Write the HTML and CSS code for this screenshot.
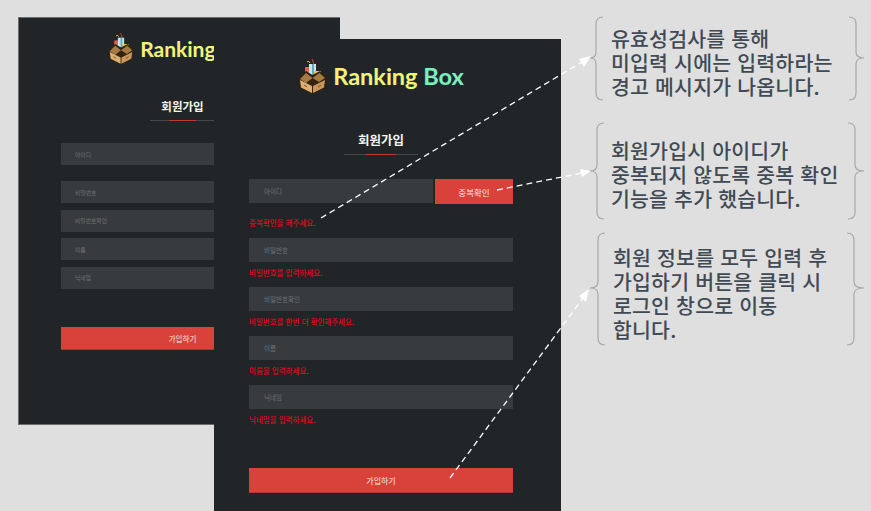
FILE: index.html
```html
<!DOCTYPE html>
<html lang="ko">
<head>
    <meta charset="UTF-8">
    <meta name="viewport" content="width=device-width, initial-scale=1.0">
    <title>회원가입</title>
    <link rel="stylesheet" href="styles.css">
</head>
<body>
    <svg class="defs" width="0" height="0">
        <symbol id="box-logo" viewBox="0 0 29 36">
            <!-- goods -->
            <path d="M14 1l2 5" stroke="#d8452f" stroke-width="1" fill="none"/>
            <path d="M9 4q2-2 3 1" stroke="#e9c04a" stroke-width="1" fill="none"/>
            <rect x="7" y="9" width="5" height="9" fill="#e8604a"/>
            <rect x="11" y="6" width="7" height="12" fill="#bfe9ee"/>
            <rect x="14" y="6" width="2" height="12" fill="#6aa7b5"/>
            <rect x="16" y="13" width="7" height="5" fill="#eec63c"/>
            <!-- box -->
            <path d="M0 21L8 13L14.500 17L22 13L29 20L27 30L14.500 36L2 30Z" fill="#33230f"/>
            <path d="M2 21L8 15L14.500 20L21.500 15L27 20L21 24L14.500 20L8 25Z" fill="#a67a45"/>
            <path d="M2 22L14 28V35L3 29.500Z" fill="#dcae74"/>
            <path d="M27 22L15 28V35L26 29.500Z" fill="#c8965a"/>
            <path d="M6 27l3 2M20 29l3-2" stroke="#7a5428" stroke-width="1" fill="none"/>
        </symbol>
    </svg>

    <section class="panel panel-back">
        <div class="logo">
            <svg class="logo-icon"><use href="#box-logo"/></svg>
            <span class="logo-text">Ranking <b>Box</b></span>
        </div>
        <h2 class="title">회원가입</h2>
        <div class="title-rule"><span></span></div>
        <form class="form">
            <input class="field first" placeholder="아이디">
            <input class="field gap-big" placeholder="비밀번호">
            <input class="field" placeholder="비밀번호확인">
            <input class="field" placeholder="이름">
            <input class="field" placeholder="닉네임">
            <button class="submit" type="button">가입하기</button>
        </form>
    </section>

    <section class="panel panel-front">
        <div class="logo">
            <svg class="logo-icon"><use href="#box-logo"/></svg>
            <span class="logo-text">Ranking <b>Box</b></span>
        </div>
        <h2 class="title">회원가입</h2>
        <div class="title-rule"><span></span></div>
        <form class="form">
            <div class="id-row">
                <input class="field" placeholder="아이디">
                <button class="check" type="button">중복확인</button>
            </div>
            <p class="error error-first">중복확인을 해주세요.</p>
            <input class="field" placeholder="비밀번호">
            <p class="error">비밀번호를 입력하세요.</p>
            <input class="field" placeholder="비밀번호확인">
            <p class="error">비밀번호를 한번 더 확인해주세요.</p>
            <input class="field" placeholder="이름">
            <p class="error">이름을 입력하세요.</p>
            <input class="field" placeholder="닉네임">
            <p class="error">닉네임을 입력하세요.</p>
            <button class="submit" type="button">가입하기</button>
        </form>
    </section>

    <!-- braces and dashed arrows over the screenshots -->
    <svg class="marks" viewBox="0 0 871 511" width="871" height="511">
        <g class="brace">
            <path d="M603 17Q596 17 596 24V52Q596 58 590 58Q596 58 596 64V93Q596 100 603 100"/>
            <path d="M849 17Q856 17 856 24V52Q856 58 864 58Q856 58 856 64V93Q856 100 849 100"/>
            <path d="M604 123Q597 123 597 130V165Q597 171 590 171Q597 171 597 177V212Q597 219 604 219"/>
            <path d="M848 123Q855 123 855 130V165Q855 171 864 171Q855 171 855 177V212Q855 219 848 219"/>
            <path d="M605 233Q598 233 598 240V282Q598 288 590 288Q598 288 598 294V338Q598 345 605 345"/>
            <path d="M847 233Q854 233 854 240V282Q854 288 864 288Q854 288 854 294V338Q854 345 847 345"/>
        </g>
        <g class="arrow">
            <path d="M321 218L582 62"/>
            <path d="M497 190L582 173"/>
            <path d="M450 478L583 298"/>
        </g>
        <g class="arrow-head">
            <path d="M591 56L579 59L584 67Z"/>
            <path d="M591 171L580 169L582 177Z"/>
            <path d="M589 289L579 296L586 302Z"/>
        </g>
    </svg>

    <div class="note note-1">유효성검사를 통해<br>미입력 시에는 입력하라는<br>경고 메시지가 나옵니다.</div>
    <div class="note note-2">회원가입시 아이디가<br>중복되지 않도록 중복 확인<br>기능을 추가 했습니다.</div>
    <div class="note note-3">회원 정보를 모두 입력 후<br>가입하기 버튼을 클릭 시<br>로그인 창으로 이동<br>합니다.</div>
</body>
</html>
```

FILE: styles.css
```css
html, body {
    margin: 0;
    height: 100%;
}
body {
    position: relative;
    overflow: hidden;
    background-color: #dfdfdf;
    font-family: "Noto Sans CJK KR", "Noto Sans", sans-serif;
}
.defs {
    position: absolute;
}

/* the two screenshots lie on a free canvas */
.panel {
    position: absolute;
    box-sizing: border-box;
    background-color: #222527;
}
.panel-back {
    left: 18px;
    top: 17px;
    width: 322px;
    height: 408px;
    padding: 14px 36px 0 42px;
    border-top: 1px solid #6a6c6d;
    border-left: 1px solid #6a6c6d;
    border-bottom: 1px solid #6a6c6d;
}
.panel-front {
    left: 214px;
    top: 39px;
    width: 347px;
    height: 480px;
    padding: 19px 48px 0 35px;
}

.logo {
    display: flex;
    justify-content: center;
    align-items: center;
    gap: 6px;
}
.logo-text {
    font-family: Lato, sans-serif;
    font-weight: 700;
    color: #fdf06c;
    white-space: nowrap;
    text-shadow: 0 0 2px #0c3a66, 0 0 1px #0c3a66;
}
.logo-text b {
    color: #84eeb0;
    font-weight: 700;
}
.panel-front .logo-icon {
    width: 29px;
    height: 36px;
}
.panel-front .logo-text {
    font-size: 23.500px;
}
.panel-back .logo-icon {
    width: 26px;
    height: 33px;
}
.panel-back .logo-text {
    font-size: 21px;
}

.title {
    margin: 0;
    text-align: center;
    color: #f4f4f4;
    font-weight: 700;
}
.panel-front .title {
    margin-top: 38px;
    font-size: 12.500px;
    line-height: 16px;
}
.panel-back .title {
    margin-top: 33px;
    font-size: 11.500px;
    line-height: 16px;
}
.title-rule {
    display: flex;
    justify-content: center;
    height: 1px;
    margin: 6px auto 0;
    background-color: #45484a;
}
.title-rule span {
    height: 1px;
    background-color: #c0392f;
}
.panel-front .title-rule {
    width: 74px;
    margin-bottom: 24px;
}
.panel-front .title-rule span {
    width: 30px;
}
.panel-back .title-rule {
    width: 66px;
    margin-bottom: 22px;
}
.panel-back .title-rule span {
    width: 27px;
}

.form {
    display: flex;
    flex-direction: column;
}
.field {
    box-sizing: border-box;
    width: 100%;
    border: none;
    outline: none;
    background-color: #383b3d;
    font-family: inherit;
    color: #ddd;
}
.field::placeholder {
    color: #6f7375;
    opacity: 1;
}
.panel-front .field {
    height: 24px;
    padding: 0 15px;
    font-size: 6.500px;
}
.panel-back .field {
    height: 22px;
    padding: 0 14px;
    font-size: 5.800px;
    margin-bottom: 6.500px;
}
.panel-back .field.first {
    margin-bottom: 16px;
}

.id-row {
    display: flex;
    gap: 2px;
}
.id-row .field {
    flex: 1;
    min-width: 0;
}
.check {
    width: 78px;
    height: 25px;
    padding: 0;
    border: none;
    background-color: #d9423a;
    color: #f3e6e4;
    font-family: inherit;
    font-size: 8.500px;
}
.error {
    margin: 0;
    height: 25px;
    padding-top: 5px;
    box-sizing: border-box;
    font-size: 7.500px;
    font-weight: 500;
    line-height: 12px;
    color: #e6041a;
}
.error-first {
    height: 34px;
    padding-top: 13px;
}

.submit {
    padding: 0;
    border: none;
    border-bottom: 1px solid #a83a32;
    background-color: #d9423a;
    color: #f3e6e4;
    font-family: inherit;
}
.panel-front .submit {
    height: 25px;
    margin-top: 34px;
    font-size: 8px;
}
.panel-back .submit {
    height: 23px;
    margin-top: 32px;
    font-size: 7.500px;
}

/* annotations */
.marks {
    position: absolute;
    left: 0;
    top: 0;
}
.brace path {
    fill: none;
    stroke: #a9a9a9;
    stroke-width: 1.200;
}
.arrow path {
    fill: none;
    stroke: #fff;
    stroke-width: 1.300;
    stroke-dasharray: 6 4;
}
.arrow-head path {
    fill: #fff;
}
.note {
    position: absolute;
    font-size: 20.500px;
    letter-spacing: 0.200px;
    line-height: 24px;
    font-weight: 500;
    color: #3f4a54;
    white-space: nowrap;
}
.note-1 {
    left: 611px;
    top: 26px;
}
.note-2 {
    left: 611px;
    top: 138px;
}
.note-3 {
    left: 613px;
    top: 245px;
}
```
